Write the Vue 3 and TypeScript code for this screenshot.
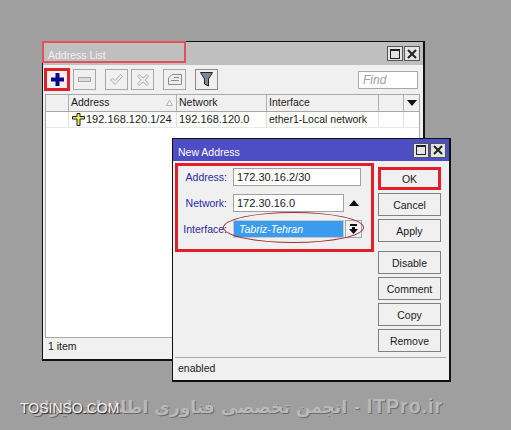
<template>
  <div class="desktop">
    <!-- Address List window -->
    <section class="window list-window">
      <header class="titlebar gray">
        <span class="title faded">Address List</span>
        <div class="win-btns">
          <button class="win-btn"><span class="max-icon"></span></button>
          <button class="win-btn">
            <svg width="10" height="10" viewBox="0 0 10 10"><path d="M1 1l8 8M9 1l-8 8" stroke="#222" stroke-width="2" /></svg>
          </button>
        </div>
      </header>
      <div class="title-mark"></div>

      <div class="toolbar">
        <button class="tool add">
          <svg width="13" height="13" viewBox="0 0 13 13"><path d="M4.500 0h4v4.500H13v4H8.500V13h-4V8.500H0v-4h4.500z" fill="#0a0a8c" /></svg>
        </button>
        <button class="tool">
          <svg width="13" height="5" viewBox="0 0 13 5"><rect x="0.500" y="0.500" width="12" height="4" fill="#dcdcdc" stroke="#a8a8a8" /></svg>
        </button>
        <button class="tool gap-l">
          <svg width="13" height="11" viewBox="0 0 13 11"><path d="M0.500 6l2-2 2.500 2.500L10.500 0.500l2 2L5 10.500z" fill="#ececec" stroke="#b0b0b0" /></svg>
        </button>
        <button class="tool">
          <svg width="12" height="12" viewBox="0 0 12 12"><path d="M2 0.500l4 3.500 4-3.500L11.500 2 8 6l3.500 4L10 11.500 6 8l-4 3.500L0.500 10 4 6 0.500 2z" fill="#ececec" stroke="#b0b0b0" /></svg>
        </button>
        <button class="tool gap-l">
          <svg width="14" height="11" viewBox="0 0 14 11"><path d="M4 0.500h9.500v10H0.500V4z" fill="#ececec" stroke="#8c8c8c" /><path d="M6 3.500h5M3 6.500h8" stroke="#8c8c8c" /></svg>
        </button>
        <button class="tool gap-l filter">
          <svg width="13" height="15" viewBox="0 0 13 15"><path d="M0.500 0.500h12L8.500 7v7l-4-2V7z" fill="#7c8a96" stroke="#222" /></svg>
        </button>
        <div class="find">Find</div>
      </div>

      <div class="table">
        <div class="t-row t-head">
          <div class="c c0"></div>
          <div class="c c1">
            Address
            <svg class="sort" width="7" height="7" viewBox="0 0 7 7"><path d="M3.500 1L6.500 6.500h-6z" fill="none" stroke="#b4b4b4" /></svg>
          </div>
          <div class="c c2">Network</div>
          <div class="c c3">Interface</div>
          <div class="c c4"></div>
          <div class="c c5"><span class="tri-down"></span></div>
        </div>
        <div class="t-row t-body">
          <div class="c c0"></div>
          <div class="c c1 addr">
            <svg class="addr-icon" width="13" height="13" viewBox="0 0 13 13"><path d="M5 0.500h3v3h4.500v2.500H8v6.500H5V6H0.500V3.500H5z" fill="#f0e860" stroke="#1c1c1c" /></svg>
            <span class="num">192.168.120.1/24</span>
          </div>
          <div class="c c2 num">192.168.120.0</div>
          <div class="c c3">ether1-Local network</div>
          <div class="c c4"></div>
          <div class="c c5"></div>
        </div>
        <div class="t-empty"></div>
      </div>
      <footer class="status">
        <span>1 item</span>
      </footer>
    </section>

    <!-- New Address dialog -->
    <section class="window dialog">
      <header class="titlebar blue">
        <span class="title">New Address</span>
        <div class="win-btns">
          <button class="win-btn"><span class="max-icon"></span></button>
          <button class="win-btn">
            <svg width="10" height="10" viewBox="0 0 10 10"><path d="M1 1l8 8M9 1l-8 8" stroke="#222" stroke-width="2" /></svg>
          </button>
        </div>
      </header>

      <div class="dialog-body">
        <div class="form">
          <div class="field">
            <label>Address:</label>
            <div class="input wide">172.30.16.2/30</div>
          </div>
          <div class="field">
            <label>Network:</label>
            <div class="input">172.30.16.0</div>
            <span class="tri-up"></span>
          </div>
          <div class="field">
            <label>Interface:</label>
            <div class="select">Tabriz-Tehran</div>
            <div class="select-btn">
              <svg width="9" height="10" viewBox="0 0 9 10"><path d="M1 0h7v2H1zM3 3h3v2h3L4.500 10 0 5h3z" fill="#111" /></svg>
            </div>
          </div>
          <div class="ellipse"></div>
        </div>

        <div class="actions">
          <button
            v-for="b in buttons"
            :key="b.label"
            class="action"
            :class="{ ok: b.label === 'OK', 'gap-t': b.label === 'Disable' }"
          >
            {{ b.label }}
          </button>
        </div>
      </div>

      <footer class="status dialog-status">
        <span>enabled</span>
      </footer>
    </section>

    <div class="mark-main">
      <span class="mark-fa" dir="rtl">انجمن تخصصی فناوری اطلاعات ایران</span>
      <span class="mark-dash">-</span>
      <span class="mark-en">ITPro.ir</span>
    </div>
    <div class="mark-site">TOSINSO.COM</div>
  </div>
</template>

<script setup lang="ts">
interface ActionButton {
  label: string;
}

const buttons: ActionButton[] = [
  { label: 'OK' },
  { label: 'Cancel' },
  { label: 'Apply' },
  { label: 'Disable' },
  { label: 'Comment' },
  { label: 'Copy' },
  { label: 'Remove' }
];
</script>

<style>
html,
body {
  margin: 0;
  background: #a09fa0;
}
</style>

<style scoped>
.desktop {
  position: relative;
  width: 511px;
  height: 430px;
  overflow: hidden;
  background: #a09fa0;
  font-family: "Liberation Sans", sans-serif;
  font-size: 10.500px;
  color: #1a1a1a;
}

.window {
  position: absolute;
  box-sizing: border-box;
  display: flex;
  flex-direction: column;
  background: #f0f0f0;
  border: 1px solid #111;
  border-width: 1px 2px 2px 1px;
}

.list-window {
  left: 42px;
  top: 41px;
  width: 383px;
  height: 320px;
}

.dialog {
  left: 172px;
  top: 138px;
  width: 279px;
  height: 244px;
}

.titlebar {
  display: flex;
  align-items: center;
  justify-content: space-between;
  flex: none;
  padding: 0 3px 0 5px;
  box-sizing: border-box;
}

.titlebar.gray {
  height: 23px;
  background: #bfbfbf;
}

.titlebar.blue {
  height: 22px;
  background: #4d4dc4;
  color: #fff;
}

.title {
  color: #fff;
  font-size: 10.500px;
  position: relative;
  top: 2px;
}

.title.faded {
  color: #f0f0f0;
  top: 1px;
}

.win-btns {
  display: flex;
  gap: 1px;
}

.win-btn {
  box-sizing: border-box;
  width: 16px;
  height: 15px;
  padding: 0;
  border: 1px solid #555;
  background: #e4e4e4;
  display: flex;
  align-items: center;
  justify-content: center;
}

.max-icon {
  display: block;
  box-sizing: border-box;
  width: 10px;
  height: 10px;
  border: 1px solid #222;
  border-top-width: 2px;
}

.title-mark {
  position: absolute;
  left: -1px;
  top: -1px;
  width: 144px;
  height: 22px;
  box-sizing: border-box;
  border: 2px solid #e2505a;
}

.toolbar {
  position: relative;
  display: flex;
  align-items: center;
  gap: 3px;
  height: 29px;
  padding: 0 5px 0 1px;
  box-sizing: border-box;
  flex: none;
}

.tool {
  box-sizing: border-box;
  width: 23px;
  height: 21px;
  padding: 0;
  background: #f0f0f0;
  border: 1px solid #a8a8a8;
  display: flex;
  align-items: center;
  justify-content: center;
}

.tool.add {
  width: 26px;
  height: 23px;
  border: 3px solid #e01f2a;
}

.tool.gap-l {
  margin-left: 6px;
}

.tool.filter {
  border-color: #8c8c8c;
}

.find {
  margin-left: auto;
  width: 60px;
  height: 18px;
  box-sizing: border-box;
  border: 1px solid #a8a8a8;
  background: #fff;
  padding: 1px 4px;
  color: #a0a0a0;
  font-style: italic;
  font-size: 12px;
}

.table {
  flex: 1;
  display: flex;
  flex-direction: column;
  margin: 0 3px 0 2px;
  border: 1px solid #a8a8a8;
  background: #fff;
  min-height: 0;
}

.t-row {
  display: flex;
  flex: none;
}

.t-head {
  height: 16px;
  background: #f0f0f0;
  border-bottom: 1px solid #a8a8a8;
}

.t-body {
  height: 15px;
  border-bottom: 1px solid #e8e8e8;
}

.t-empty {
  flex: 1;
}

.c {
  position: relative;
  box-sizing: border-box;
  padding: 0 2px 0 2px;
  line-height: 15px;
  border-right: 1px solid #b0b0b0;
  white-space: nowrap;
}

.t-body .c {
  border-right-color: #e0e0e0;
}

.c0 {
  width: 23px;
}

.c1 {
  width: 108px;
}

.c2 {
  width: 90px;
}

.c3 {
  width: 112px;
}

.c4 {
  width: 25px;
}

.c5 {
  flex: 1;
  border-right: 0;
}

.num {
  font-size: 11px;
}

.addr {
  display: flex;
  align-items: center;
  gap: 1px;
  padding-left: 3px;
}

.addr-icon {
  flex: none;
}

.sort {
  position: absolute;
  right: 3px;
  top: 4px;
}

.tri-down {
  position: absolute;
  left: 3px;
  top: 5px;
  border-left: 5px solid transparent;
  border-right: 5px solid transparent;
  border-top: 6px solid #111;
}

.status {
  flex: none;
  height: 21px;
  padding-left: 5px;
  line-height: 17px;
}

.dialog-body {
  flex: 1;
  display: flex;
  min-height: 0;
  padding: 2px 8px 0 2px;
}

.form {
  position: relative;
  box-sizing: border-box;
  width: 199px;
  height: 89px;
  border: 3px solid #e01f2a;
  padding: 2px 0 0 0;
  display: flex;
  flex-direction: column;
  gap: 8px;
}

.field {
  display: flex;
  align-items: center;
  height: 18px;
}

.field label {
  flex: none;
  width: 49px;
  text-align: right;
  color: #2a2aa8;
  margin-right: 6px;
}

.field:nth-child(3) label {
  color: #2a2a90;
}

.input {
  box-sizing: border-box;
  width: 111px;
  height: 18px;
  background: #fff;
  border: 1px solid #a0a0a0;
  padding: 0 3px;
  line-height: 16px;
  font-size: 11px;
}

.input.wide {
  width: 128px;
}

.tri-up {
  margin-left: 5px;
  border-left: 5px solid transparent;
  border-right: 5px solid transparent;
  border-bottom: 6px solid #111;
}

.select {
  box-sizing: border-box;
  width: 111px;
  height: 18px;
  background: #3a9bef;
  color: #fff;
  font-style: italic;
  padding: 0 5px;
  line-height: 17px;
  border: 1px solid #c8c8c8;
}

.select-btn {
  box-sizing: border-box;
  width: 17px;
  height: 18px;
  margin-left: 1px;
  border: 1px solid #a8a8a8;
  display: flex;
  align-items: center;
  justify-content: center;
}

.ellipse {
  position: absolute;
  left: 45px;
  top: 46px;
  width: 141px;
  height: 31px;
  box-sizing: border-box;
  border: 1px solid #a82a3a;
  border-radius: 50%;
}

.actions {
  display: flex;
  flex-direction: column;
  gap: 3px;
  margin-left: 4px;
  padding-top: 4px;
}

.action {
  box-sizing: border-box;
  width: 63px;
  height: 23px;
  flex: none;
  padding: 0;
  background: #f0f0f0;
  border: 1px solid #808080;
  font: 10.500px "Liberation Sans", sans-serif;
  color: #1a1a1a;
}

.action.ok {
  border: 3px solid #e01f2a;
}

.action.gap-t {
  margin-top: 6px;
}

.dialog-status {
  border-top: 1px solid #a8a8a8;
  margin: 0 3px 0 2px;
  height: 22px;
  padding-left: 3px;
  line-height: 20px;
}

.mark-main {
  position: absolute;
  right: 68px;
  top: 395px;
  display: flex;
  align-items: center;
  gap: 7px;
  white-space: nowrap;
  color: #b9b9b9;
  text-shadow: 1px 1px 0 #6e6e6e;
}

.mark-fa {
  font: bold 17px "DejaVu Sans", sans-serif;
}

.mark-dash {
  font: bold 17px "Liberation Sans", sans-serif;
}

.mark-en {
  font: bold 19.500px "Liberation Sans", sans-serif;
  letter-spacing: 1px;
}

.mark-site {
  position: absolute;
  left: 20px;
  top: 400px;
  font: 14px "Liberation Sans", sans-serif;
  color: #f2f2f2;
  text-shadow: 1px 1px 1px #222;
}
</style>
